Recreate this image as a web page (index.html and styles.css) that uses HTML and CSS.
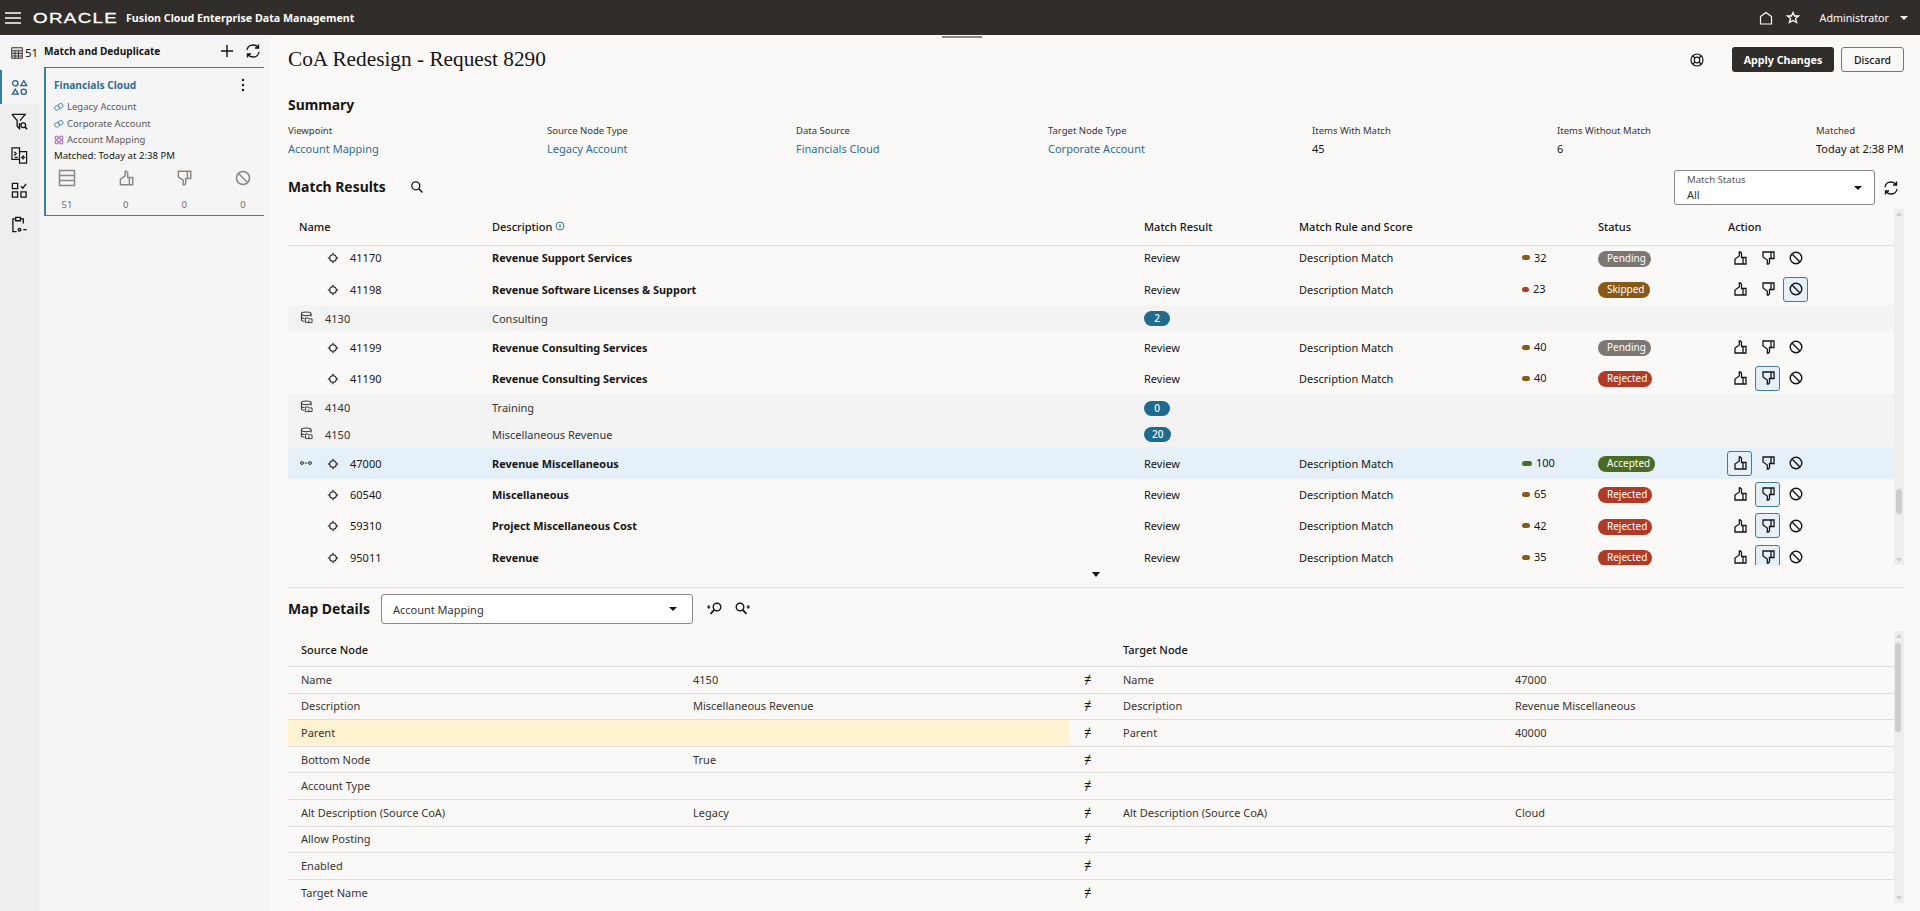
FILE: index.html
```html
<!DOCTYPE html>
<html lang="en">
<head>
<meta charset="utf-8">
<title>CoA Redesign - Request 8290</title>
<link rel="stylesheet" href="styles.css">
</head>
<body>
<svg class="defs" width="0" height="0" aria-hidden="true">
  <defs>
    <symbol id="i-up" viewBox="0 0 16 16"><path d="M11 7.5H14V14H11ZM11 7.5H9.5V3.2L8.4 2H7.3V6L3 9V14H11" fill="none" stroke="currentColor" stroke-width="1.3"/></symbol>
    <symbol id="i-down" viewBox="0 0 16 16"><path d="M11 8.5H14V2H11ZM11 8.5H9.5V12.8L8.4 14H7.3V10L3 7V2H11" fill="none" stroke="currentColor" stroke-width="1.3"/></symbol>
    <symbol id="i-no" viewBox="0 0 16 16"><circle cx="8" cy="8" r="5.8" fill="none" stroke="currentColor" stroke-width="1.4"/><path d="M4 4L12 12" stroke="currentColor" stroke-width="1.4"/></symbol>
    <symbol id="i-target" viewBox="0 0 12 12"><circle cx="6" cy="6" r="3.3" fill="none" stroke="currentColor" stroke-width="1.1"/><path d="M6 .8V2.6M6 9.4V11.2M.8 6H2.6M9.4 6H11.2" stroke="currentColor" stroke-width="1.1"/></symbol>
    <symbol id="i-db" viewBox="0 0 14 14"><path d="M1.5 9.5V3C1.5 1.5 4 1 6.5 1S12 1.5 12 3V6M1.5 3C1.5 4.5 4 5 6.5 5S12 4.5 12 3M1.5 6.5C1.5 7.5 3 8 5 8M1.5 9.5C1.5 10.5 3 11 5 11" fill="none" stroke="currentColor" stroke-width="1.1"/><path d="M6 7.5H9M6 7.5V12.5H13V8.5H9.5L9 7.5M9.5 10V12.5" fill="none" stroke="currentColor" stroke-width="1"/></symbol>
    <symbol id="i-refresh" viewBox="0 0 16 16"><path d="M2 7C2.4 4 5 2 8 2C10.2 2 12 3 13 4.5M14 9C13.6 12 11 14 8 14C5.8 14 4 13 3 11.5M13.5 1.5V5H10M2.5 14.5V11H6" fill="none" stroke="currentColor" stroke-width="1.4"/></symbol>
    <symbol id="i-link" viewBox="0 0 12 12"><rect x="1" y="4.5" width="5" height="5" rx="1.5" transform="rotate(-30 3.5 7)" fill="none" stroke="currentColor"/><rect x="5.5" y="2" width="5" height="5" rx="1.5" transform="rotate(-30 8 4.5)" fill="none" stroke="currentColor"/></symbol>
    <symbol id="i-grid" viewBox="0 0 12 12"><path d="M1.5 1.5H5V5H1.5ZM7 1.5H10.5V5H7ZM1.5 7H5V10.5H1.5ZM7 7H10.5V10.5H7Z" fill="none" stroke="currentColor" stroke-width="1.2"/></symbol>
    <symbol id="i-rows" viewBox="0 0 18 18"><path d="M1.5 1.5H16.5V16.5H1.5ZM1.5 6.5H16.5M1.5 11.5H16.5" fill="none" stroke="currentColor" stroke-width="1.5"/></symbol>
  </defs>
</svg>

<header class="topbar">
  <div class="brand">
    <svg class="burger" viewBox="0 0 16 12"><path d="M0 1H16M0 6H16M0 11H16" stroke="#fff" stroke-width="1.5"/></svg>
    <span class="logo">ORACLE</span>
    <span class="product">Fusion Cloud Enterprise Data Management</span>
  </div>
  <div class="userbar">
    <svg class="top-icon" viewBox="0 0 14 14"><path d="M1.5 13V5.5L7 1.5L12.5 5.5V13Z" fill="none" stroke="#fff" stroke-width="1.2"/></svg>
    <svg class="top-icon" viewBox="0 0 14 14"><path d="M7 1.5L8.6 5H12.5L9.5 7.6L10.6 11.5L7 9.4L3.4 11.5L4.5 7.6L1.5 5H5.4Z" fill="none" stroke="#fff" stroke-width="1.3"/></svg>
    <span class="admin">Administrator</span>
    <span class="caret caret-white"></span>
  </div>
</header>

<div class="shell">
  <nav class="rail">
    <div class="rail-item rail-count">
      <svg class="rail-small" viewBox="0 0 12 12"><path d="M.7.7H11.3V11.3H.7ZM.7 3.8H11.3M.7 6.4H11.3M.7 9H11.3M4 3.8V11.3M7.5 3.8V11.3" fill="#dcdcdc" stroke="#312d2a" stroke-width=".9"/></svg><span>51</span>
    </div>
    <div class="rail-item rail-active">
      <svg class="rail-icon" viewBox="0 0 18 18"><g fill="none" stroke="#21648a" stroke-width="1.4"><circle cx="4.5" cy="4.5" r="2.8"/><path d="M13.5 1.8L16.6 7H10.4Z"/><path d="M4.5 10.8L7.6 16H1.4Z"/><circle cx="13.5" cy="13.5" r="2.8"/></g></svg>
    </div>
    <div class="rail-item">
      <svg class="rail-icon" viewBox="0 0 18 18"><g fill="none" stroke="#161513" stroke-width="1.4"><path d="M1 1.5H15L9.5 8M9 10.5V16.5L6.5 14V8L1 1.5"/><circle cx="13" cy="13" r="2.5"/><path d="M15 15L17 17" stroke-width="1.8"/></g></svg>
    </div>
    <div class="rail-item">
      <svg class="rail-icon" viewBox="0 0 18 18"><g fill="none" stroke="#161513" stroke-width="1.3"><path d="M1 1H9V13H1Z"/><path d="M9 5H16.5V17H9V13"/><path d="M3.5 5L5.5 7L3.5 9M13.5 9L11.5 11L13.5 13M13 11H15M4 11H7"/></g></svg>
    </div>
    <div class="rail-item">
      <svg class="rail-icon" viewBox="0 0 18 18"><g fill="none" stroke="#161513" stroke-width="1.4"><path d="M1.5 1.5H7V7H1.5ZM1.5 10.5H7V16H1.5ZM10.5 10.5H16V16H10.5Z"/><path d="M10.5 4.5L12.5 6.5L16 2"/></g></svg>
    </div>
    <div class="rail-item">
      <svg class="rail-icon" viewBox="0 0 18 18"><g fill="none" stroke="#161513" stroke-width="1.4"><path d="M5 3H2V16.5H6M13 8V3H10"/><path d="M5 1.5H10V5H5Z"/><circle cx="9" cy="14.5" r="1.4"/><path d="M13 14.5H16.5"/></g></svg>
    </div>
  </nav>

  <aside class="panel">
    <div class="panel-head">
      <span class="panel-title">Match and Deduplicate</span>
      <div class="panel-tools">
        <svg class="panel-plus" viewBox="0 0 14 14"><path d="M7 1V13M1 7H13" stroke="#161513" stroke-width="1.4"/></svg>
        <svg class="ic16"><use href="#i-refresh"/></svg>
      </div>
    </div>
    <section class="card">
      <div class="card-top">
        <span class="card-title">Financials Cloud</span>
        <svg class="kebab" viewBox="0 0 4 14"><circle cx="2" cy="2" r="1.2"/><circle cx="2" cy="7" r="1.2"/><circle cx="2" cy="12" r="1.2"/></svg>
      </div>
      <div class="card-line"><svg class="ic-s ic-blue"><use href="#i-link"/></svg>Legacy Account</div>
      <div class="card-line"><svg class="ic-s ic-blue"><use href="#i-link"/></svg>Corporate Account</div>
      <div class="card-line"><svg class="ic-s ic-purple"><use href="#i-grid"/></svg>Account Mapping</div>
      <div class="card-matched">Matched: Today at 2:38 PM</div>
      <div class="card-stats">
        <div class="stat"><svg class="ic-stat"><use href="#i-rows"/></svg><span>51</span></div>
        <div class="stat"><svg class="ic-stat"><use href="#i-up"/></svg><span>0</span></div>
        <div class="stat"><svg class="ic-stat"><use href="#i-down"/></svg><span>0</span></div>
        <div class="stat"><svg class="ic-stat"><use href="#i-no"/></svg><span>0</span></div>
      </div>
    </section>
  </aside>

  <main class="main">
    <div class="grab"></div>
    <div class="title-row">
      <h1 class="page-title">CoA Redesign - Request 8290</h1>
      <div class="title-actions">
        <svg class="buoy" viewBox="0 0 14 14"><g fill="none" stroke="#161513" stroke-width="1.2"><circle cx="7" cy="7" r="6"/><circle cx="7" cy="7" r="2.8"/><path d="M2.8 2.8L5 5M11.2 2.8L9 5M2.8 11.2L5 9M11.2 11.2L9 9"/></g></svg>
        <button class="btn btn-dark">Apply Changes</button>
        <button class="btn btn-light">Discard</button>
      </div>
    </div>

    <h2 class="section-title summary-title">Summary</h2>
    <div class="summary">
      <div><div class="f-label">Viewpoint</div><a class="f-link">Account Mapping</a></div>
      <div><div class="f-label">Source Node Type</div><a class="f-link">Legacy Account</a></div>
      <div><div class="f-label">Data Source</div><a class="f-link">Financials Cloud</a></div>
      <div><div class="f-label">Target Node Type</div><a class="f-link">Corporate Account</a></div>
      <div><div class="f-label">Items With Match</div><div class="f-value">45</div></div>
      <div><div class="f-label">Items Without Match</div><div class="f-value">6</div></div>
      <div><div class="f-label">Matched</div><div class="f-value">Today at 2:38 PM</div></div>
    </div>

    <div class="results-head">
      <div class="results-left">
        <h2 class="section-title">Match Results</h2>
        <svg class="search" viewBox="0 0 14 14"><circle cx="5.8" cy="5.8" r="4" fill="none" stroke="#161513" stroke-width="1.3"/><path d="M8.8 8.8L12.5 12.5" stroke="#161513" stroke-width="1.5"/></svg>
      </div>
      <div class="results-right">
        <div class="select status-select">
          <div><div class="select-label">Match Status</div><div class="select-value">All</div></div>
          <span class="caret"></span>
        </div>
        <svg class="ic16"><use href="#i-refresh"/></svg>
      </div>
    </div>

    <div class="table-wrap">
      <div class="table">
        <div class="row row-head">
          <div class="c-name">Name</div>
          <div class="c-head-desc">Description <svg class="info" viewBox="0 0 10 10"><circle cx="5" cy="5" r="4" fill="none" stroke="#2a6f96" stroke-width=".9"/><path d="M5 3V7.2" stroke="#2a6f96"/></svg></div>
          <div>Match Result</div>
          <div class="c-span">Match Rule and Score</div>
          <div>Status</div>
          <div class="c-head-action">Action</div>
        </div>
        <div class="rows-clip">
          <div class="rows">
            <div class="row row-item"><div class="c-name"><svg class="ic-target"><use href="#i-target"/></svg>41170</div><div class="c-strong">Revenue Support Services</div><div>Review</div><div>Description Match</div><div class="score"><i class="bar bar-brown"></i>32</div><div><span class="badge b-pending">Pending</span></div><div class="actions"><span class="act"><svg class="ic16"><use href="#i-up"/></svg></span><span class="act"><svg class="ic16"><use href="#i-down"/></svg></span><span class="act"><svg class="ic16"><use href="#i-no"/></svg></span></div></div>
            <div class="row row-item"><div class="c-name"><svg class="ic-target"><use href="#i-target"/></svg>41198</div><div class="c-strong">Revenue Software Licenses &amp; Support</div><div>Review</div><div>Description Match</div><div class="score"><i class="bar bar-red"></i>23</div><div><span class="badge b-skipped">Skipped</span></div><div class="actions"><span class="act"><svg class="ic16"><use href="#i-up"/></svg></span><span class="act"><svg class="ic16"><use href="#i-down"/></svg></span><span class="act act-on"><svg class="ic16"><use href="#i-no"/></svg></span></div></div>
            <div class="row row-group"><div class="c-group"><svg class="ic-db"><use href="#i-db"/></svg>4130</div><div>Consulting</div><div><span class="count">2</span></div></div>
            <div class="row row-item"><div class="c-name"><svg class="ic-target"><use href="#i-target"/></svg>41199</div><div class="c-strong">Revenue Consulting Services</div><div>Review</div><div>Description Match</div><div class="score"><i class="bar bar-brown"></i>40</div><div><span class="badge b-pending">Pending</span></div><div class="actions"><span class="act"><svg class="ic16"><use href="#i-up"/></svg></span><span class="act"><svg class="ic16"><use href="#i-down"/></svg></span><span class="act"><svg class="ic16"><use href="#i-no"/></svg></span></div></div>
            <div class="row row-item"><div class="c-name"><svg class="ic-target"><use href="#i-target"/></svg>41190</div><div class="c-strong">Revenue Consulting Services</div><div>Review</div><div>Description Match</div><div class="score"><i class="bar bar-brown"></i>40</div><div><span class="badge b-rejected">Rejected</span></div><div class="actions"><span class="act"><svg class="ic16"><use href="#i-up"/></svg></span><span class="act act-on"><svg class="ic16"><use href="#i-down"/></svg></span><span class="act"><svg class="ic16"><use href="#i-no"/></svg></span></div></div>
            <div class="row row-group"><div class="c-group"><svg class="ic-db"><use href="#i-db"/></svg>4140</div><div>Training</div><div><span class="count">0</span></div></div>
            <div class="row row-group"><div class="c-group"><svg class="ic-db"><use href="#i-db"/></svg>4150</div><div>Miscellaneous Revenue</div><div><span class="count">20</span></div></div>
            <div class="row row-item row-selected"><div class="c-name"><svg class="ic-pair" viewBox="0 0 12 4"><circle cx="2" cy="2" r="1.4" fill="none" stroke="#161513" stroke-width=".9"/><circle cx="10" cy="2" r="1.4" fill="none" stroke="#161513" stroke-width=".9"/><path d="M4.5 2H7.5" stroke="#161513" stroke-width=".8"/></svg><svg class="ic-target"><use href="#i-target"/></svg>47000</div><div class="c-strong">Revenue Miscellaneous</div><div>Review</div><div>Description Match</div><div class="score"><i class="bar bar-green"></i>100</div><div><span class="badge b-accepted">Accepted</span></div><div class="actions"><span class="act act-on"><svg class="ic16"><use href="#i-up"/></svg></span><span class="act"><svg class="ic16"><use href="#i-down"/></svg></span><span class="act"><svg class="ic16"><use href="#i-no"/></svg></span></div></div>
            <div class="row row-item"><div class="c-name"><svg class="ic-target"><use href="#i-target"/></svg>60540</div><div class="c-strong">Miscellaneous</div><div>Review</div><div>Description Match</div><div class="score"><i class="bar bar-brown"></i>65</div><div><span class="badge b-rejected">Rejected</span></div><div class="actions"><span class="act"><svg class="ic16"><use href="#i-up"/></svg></span><span class="act act-on"><svg class="ic16"><use href="#i-down"/></svg></span><span class="act"><svg class="ic16"><use href="#i-no"/></svg></span></div></div>
            <div class="row row-item"><div class="c-name"><svg class="ic-target"><use href="#i-target"/></svg>59310</div><div class="c-strong">Project Miscellaneous Cost</div><div>Review</div><div>Description Match</div><div class="score"><i class="bar bar-brown"></i>42</div><div><span class="badge b-rejected">Rejected</span></div><div class="actions"><span class="act"><svg class="ic16"><use href="#i-up"/></svg></span><span class="act act-on"><svg class="ic16"><use href="#i-down"/></svg></span><span class="act"><svg class="ic16"><use href="#i-no"/></svg></span></div></div>
            <div class="row row-item"><div class="c-name"><svg class="ic-target"><use href="#i-target"/></svg>95011</div><div class="c-strong">Revenue</div><div>Review</div><div>Description Match</div><div class="score"><i class="bar bar-brown"></i>35</div><div><span class="badge b-rejected">Rejected</span></div><div class="actions"><span class="act"><svg class="ic16"><use href="#i-up"/></svg></span><span class="act act-on"><svg class="ic16"><use href="#i-down"/></svg></span><span class="act"><svg class="ic16"><use href="#i-no"/></svg></span></div></div>
          </div>
        </div>
      </div>
      <div class="scrollbar">
        <span class="sb-up"></span>
        <span class="sb-thumb sb-thumb-results"></span>
        <span class="sb-down"></span>
      </div>
    </div>

    <div class="splitter"><span class="split-caret"></span></div>

    <div class="map-head">
      <h2 class="section-title">Map Details</h2>
      <div class="select map-select"><span class="select-value">Account Mapping</span><span class="caret"></span></div>
      <svg class="ic-zoom" viewBox="0 0 16 16"><g fill="none" stroke="#161513" stroke-width="1.4"><circle cx="10" cy="6" r="3.8"/><path d="M7.2 8.8L3.5 13" stroke-width="1.8"/><path d="M0 6H3.5M1.8 4.2V7.8" stroke-width="1.2"/></g></svg>
      <svg class="ic-zoom" viewBox="0 0 16 16"><g fill="none" stroke="#161513" stroke-width="1.4"><circle cx="6" cy="6" r="3.8"/><path d="M8.8 8.8L12.5 13" stroke-width="1.8"/><path d="M12.5 6H16M14.2 4.2V7.8" stroke-width="1.2"/></g></svg>
    </div>

    <div class="table-wrap map-wrap">
      <div class="table map-table">
        <div class="m-row m-head"><div class="m-src">Source Node</div><div class="m-sign"></div><div class="m-tgt">Target Node</div></div>
        <div class="m-row"><div class="m-src"><span>Name</span><span>4150</span></div><div class="m-sign">≠</div><div class="m-tgt"><span>Name</span><span>47000</span></div></div>
        <div class="m-row"><div class="m-src"><span>Description</span><span>Miscellaneous Revenue</span></div><div class="m-sign">≠</div><div class="m-tgt"><span>Description</span><span>Revenue Miscellaneous</span></div></div>
        <div class="m-row"><div class="m-src m-warn"><span>Parent</span><span></span></div><div class="m-sign">≠</div><div class="m-tgt"><span>Parent</span><span>40000</span></div></div>
        <div class="m-row"><div class="m-src"><span>Bottom Node</span><span>True</span></div><div class="m-sign">≠</div><div class="m-tgt"></div></div>
        <div class="m-row"><div class="m-src"><span>Account Type</span><span></span></div><div class="m-sign">≠</div><div class="m-tgt"></div></div>
        <div class="m-row"><div class="m-src"><span>Alt Description (Source CoA)</span><span>Legacy</span></div><div class="m-sign">≠</div><div class="m-tgt"><span>Alt Description (Source CoA)</span><span>Cloud</span></div></div>
        <div class="m-row"><div class="m-src"><span>Allow Posting</span><span></span></div><div class="m-sign">≠</div><div class="m-tgt"></div></div>
        <div class="m-row"><div class="m-src"><span>Enabled</span><span></span></div><div class="m-sign">≠</div><div class="m-tgt"></div></div>
        <div class="m-row"><div class="m-src"><span>Target Name</span><span></span></div><div class="m-sign">≠</div><div class="m-tgt"></div></div>
      </div>
      <div class="scrollbar">
        <span class="sb-up"></span>
        <span class="sb-thumb sb-thumb-map"></span>
        <span class="sb-down"></span>
      </div>
    </div>
  </main>
</div>
</body>
</html>
```

FILE: styles.css
```css
* { box-sizing: border-box; }
html, body { height: 911px; margin: 0; overflow: hidden; }
body { font-family: "Noto Sans", "Open Sans", sans-serif; font-size: 11px; line-height: 16px; color: #161513; background: #fbf9f8; }
.defs { position: absolute; }
svg { display: block; flex: none; }

.topbar { height: 35px; background: #312d2a; display: flex; align-items: center; justify-content: space-between; color: #fff; padding: 0 12px 0 5px; }
.brand { display: flex; align-items: center; }
.burger { width: 16px; height: 12px; }
.logo { font-family: "Liberation Sans", sans-serif; font-size: 14px; margin-left: 12px; width: 85px; letter-spacing: 1px; transform: scaleX(1.34); transform-origin: left center; -webkit-text-stroke: .3px #fff; }
.product { font-weight: 700; font-size: 10.7px; margin-left: 8px; }
.userbar { display: flex; align-items: center; }
.top-icon { width: 14px; height: 14px; margin-right: 13px; }
.top-icon + .admin { margin-left: 7px; }
.admin { font-size: 10.7px; margin-right: 11px; }
.caret { width: 0; height: 0; border-left: 4px solid transparent; border-right: 4px solid transparent; border-top: 4px solid #161513; flex: none; }
.caret-white { border-top-color: #fff; }

.shell { display: flex; height: 876px; }
.rail { width: 39px; background: #eeeeee; flex: none; }
.rail-item { height: 34.4px; display: flex; align-items: center; justify-content: center; }
.rail-count { height: 35px; background: #f5f5f5; justify-content: flex-start; padding-left: 11px; gap: 2px; font-size: 11.5px; }
.rail-small { width: 12px; height: 12px; }
.rail-active { background: #f5f5f5; box-shadow: inset 2px 0 0 #3b7ea1; }
.rail-icon { width: 17px; height: 17px; }

.panel { width: 231px; flex: none; background: #f5f5f5; padding: 0 6px 0 5px; }
.panel-head { height: 32px; display: flex; align-items: center; justify-content: space-between; padding-right: 3px; }
.panel-title { font-weight: 700; font-size: 10.1px; }
.panel-tools { display: flex; align-items: center; gap: 11px; }
.panel-plus { width: 14px; height: 14px; }
.ic16 { width: 16px; height: 16px; }
.card { width: 220px; height: 149px; border: solid #3b7ea1; border-width: 1px 0 1px 2px; padding: 9px 0 0 8px; }
.card-top { display: flex; justify-content: space-between; align-items: center; height: 16px; padding-right: 19px; }
.card-title { font-weight: 700; font-size: 10.2px; color: #2a6f96; }
.kebab { width: 4px; height: 14px; fill: #161513; }
.card-line { display: flex; align-items: center; gap: 3px; height: 16px; margin-top: .5px; font-size: 9.5px; color: #5c5855; }
.card-top + .card-line { margin-top: 6px; }
.ic-s { width: 10px; height: 10px; }
.ic-blue { color: #2f7ba3; }
.ic-purple { color: #9a62b5; }
.card-matched { font-size: 9.6px; height: 15px; line-height: 15px; }
.card-stats { display: flex; margin-top: 6px; padding-right: 6px; justify-content: space-between; width: 212px; margin-left: -2px; }
.stat { width: 30px; display: flex; flex-direction: column; align-items: center; color: #8b8784; font-size: 9.5px; }
.stat span { margin-top: 10px; color: #6f6b68; }
.ic-stat { width: 18px; height: 18px; }

.main { flex: 1; min-width: 0; padding: 12px 16px 0 18px; position: relative; }
.grab { position: absolute; left: 672px; top: 1px; width: 40px; height: 2px; background: #8a8684; }
.title-row { height: 25px; display: flex; justify-content: space-between; align-items: center; }
.page-title { font-family: "Liberation Serif", serif; font-weight: 400; font-size: 21.3px; margin: 0; line-height: 25px; }
.title-actions { display: flex; align-items: center; }
.buoy { width: 14px; height: 14px; margin-right: 28px; }
.btn { height: 25px; border-radius: 3px; font: inherit; padding: 0; }
.btn-dark { width: 102px; background: #312d2a; color: #fff; border: 0; font-weight: 700; font-size: 10.7px; margin-right: 7px; }
.btn-light { width: 63px; background: transparent; border: 1px solid #7a7673; color: #161513; font-weight: 500; font-size: 10.4px; }
.section-title { font-weight: 700; font-size: 13.9px; line-height: 20px; margin: 0; }
.summary-title { margin-top: 23px; }
.summary { display: grid; grid-template-columns: 259px 249px 252px 264px 245px 259px 88px; margin-top: 8px; }
.f-label { font-size: 9.5px; line-height: 16px; color: #38342f; }
.f-link, .f-value { display: block; font-size: 11px; line-height: 18px; margin-top: 1px; white-space: nowrap; }
.f-link { color: #2a6f96; }

.results-head { display: flex; justify-content: space-between; align-items: center; height: 35px; margin-top: 12px; }
.results-left { display: flex; align-items: center; gap: 24px; margin-top: -1px; }
.search { width: 14px; height: 14px; }
.results-right { display: flex; align-items: center; gap: 8px; padding-right: 5px; }
.select { display: flex; align-items: center; justify-content: space-between; background: #fff; border: 1px solid #8b8784; border-radius: 3px; }
.status-select { width: 201px; height: 35px; padding: 0 12px; }
.select-label { font-size: 9.6px; line-height: 14px; color: #5c5855; }
.select-value { font-size: 11px; line-height: 15px; color: #38342f; }

.table-wrap { display: flex; margin-top: 4px; height: 356px; }
.table { width: 1606px; flex: none; overflow: hidden; }
.scrollbar { width: 10px; background: #efeeed; position: relative; display: flex; flex-direction: column; align-items: center; justify-content: space-between; padding: 3px 0; }
.sb-up, .sb-down { width: 0; height: 0; border-left: 3px solid transparent; border-right: 3px solid transparent; }
.sb-up { border-bottom: 4px solid #cfcdcb; }
.sb-down { border-top: 4px solid #cfcdcb; }
.sb-thumb { position: absolute; left: 2px; width: 6px; background: #cfcdcb; border-radius: 3px; }
.sb-thumb-results { top: 280px; height: 25px; }
.sb-thumb-map { top: 12px; left: 1px; height: 89px; }

.row { display: grid; grid-template-columns: 204px 652px 155px 223px 76px 126px 170px; align-items: center; font-size: 11px; }
.row-head { height: 37px; border-bottom: 1px solid #dfdedd; font-weight: 500; grid-template-columns: 204px 652px 155px 299px 130px 166px; }
.row-head > div { padding-bottom: 1px; }
.row-head .c-name { padding-left: 11px; }
.c-head-desc { display: flex; align-items: center; gap: 3px; }
.info { width: 10px; height: 10px; margin-top: -2px; }
.rows-clip { height: 319px; overflow: hidden; }
.rows { margin-top: -4px; }
.row-item { height: 31.4px; }
.row-item > div:not(.score):not(.actions) { padding-top: 1px; }
.row-group { height: 26.6px; background: #f3f3f3; grid-template-columns: 204px 652px 155px; color: #38342f; }
.row-group > div:not(:last-child) { padding-top: 1px; }
.row-selected { background: #e5f0f9; }
.c-name { display: flex; align-items: center; padding-left: 39px; position: relative; }
.c-group { display: flex; align-items: center; padding-left: 12px; gap: 12px; margin-top: 0; }
.c-strong { font-weight: 700; font-size: 10.9px; }
.ic-target { width: 12px; height: 12px; margin-right: 11px; }
.ic-db { width: 13px; height: 13px; margin-top: -2px; color: #38342f; }
.ic-pair { position: absolute; left: 12px; top: 6px; width: 12px; height: 4px; }
.score { display: flex; align-items: center; gap: 4px; }
.bar { display: block; height: 5px; width: 8px; border-radius: 3px; }
.bar-brown { background: #8a5915; }
.bar-red { width: 7px; background: #b03a27; }
.bar-green { width: 10px; background: #4a6b24; }
.badge { display: inline-block; height: 16px; line-height: 15px; border-radius: 8px; color: #fff; font-size: 10px; padding: 0 9px; }
.b-pending { background: #7d7773; width: 53px; }
.b-skipped { background: #8a5915; width: 52px; }
.b-rejected { background: #b03a27; width: 54px; }
.b-accepted { background: #4a6b24; width: 57px; }
.count { display: inline-block; min-width: 26px; height: 15px; line-height: 15px; padding: 0 8px; border-radius: 8px; background: #1f6a8f; color: #fff; font-size: 10px; text-align: center; font-weight: 500; vertical-align: middle; }
.actions { display: flex; gap: 3px; margin-left: 3px; }
.act { width: 25px; height: 25px; display: flex; align-items: center; justify-content: center; border: 1px solid transparent; border-radius: 3px; }
.act-on { border-color: #3b7ea1; background: #e5f0f9; }
.splitter { height: 23px; border-bottom: 1px solid #dfdedd; display: flex; justify-content: center; align-items: center; padding-right: 1px; margin-right: 0; }
.split-caret { width: 0; height: 0; border-left: 4px solid transparent; border-right: 4px solid transparent; border-top: 5px solid #161513; margin-left: 0; margin-top: -3px; }

.map-head { display: flex; align-items: center; margin-top: 6px; height: 30px; }
.map-select { width: 312px; height: 30px; padding: 0 15px 0 11px; margin: 0 14px 0 11px; }
.ic-zoom { width: 16px; height: 16px; margin-right: 11px; }
.map-wrap { margin-top: 7px; height: 272px; }
.map-table { font-size: 11px; }
.m-row { display: grid; grid-template-columns: 782px 42px 782px; height: 26.62px; border-bottom: 1px solid #dfdedd; align-items: stretch; }
.m-head { height: 36px; font-weight: 500; }
.m-src { display: grid; grid-template-columns: 392px 1fr; padding-left: 13px; align-items: center; color: #38342f; }
.m-tgt { display: grid; grid-template-columns: 392px 1fr; padding-left: 11px; align-items: center; color: #38342f; }
.m-head .m-src, .m-head .m-tgt { display: flex; color: #161513; padding-top: 2px; }
.m-sign { display: flex; align-items: center; padding-left: 14px; font-size: 13px; padding-bottom: 2px; }
.m-warn { background: #fff3d1; }
```
